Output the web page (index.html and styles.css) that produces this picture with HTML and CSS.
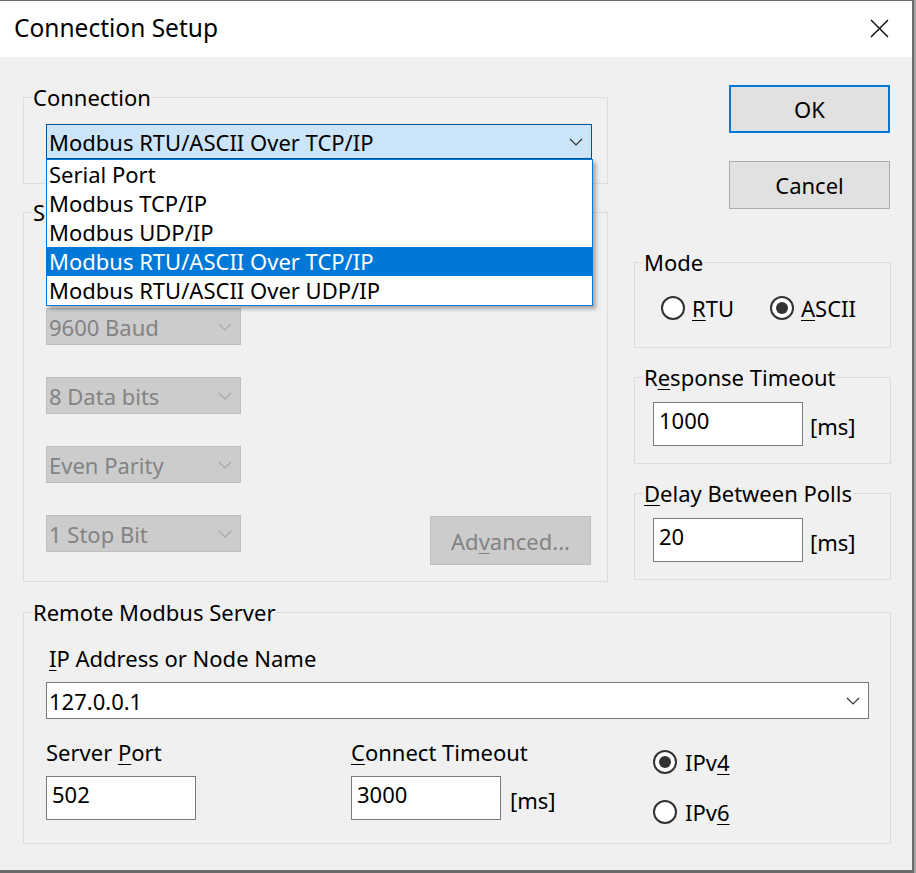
FILE: index.html
```html
<!DOCTYPE html>
<html lang="en">
<head>
<meta charset="utf-8">
<title>Connection Setup</title>
<link rel="stylesheet" href="styles.css">
</head>
<body>
<div class="window">
  <div class="titlebar">
    <span class="title">Connection Setup</span>
    <svg class="close" width="19" height="19" viewBox="0 0 19 19"><path d="M1 1 L18 18 M18 1 L1 18"/></svg>
  </div>
  <div class="content">
    <div class="top">
      <div class="left-col">
        <fieldset class="group group-conn">
          <legend class="group-title">Connection</legend>
          <div class="combo combo-active combo-conn">
            <span class="combo-text">Modbus RTU/ASCII Over TCP/IP</span>
            <svg class="chev" width="14" height="8" viewBox="0 0 14 8"><polyline points="1,1 7,7 13,1"/></svg>
            <ul class="droplist">
              <li>Serial Port</li>
              <li>Modbus TCP/IP</li>
              <li>Modbus UDP/IP</li>
              <li class="sel">Modbus RTU/ASCII Over TCP/IP</li>
              <li>Modbus RTU/ASCII Over UDP/IP</li>
            </ul>
          </div>
        </fieldset>
        <fieldset class="group group-serial">
          <legend class="group-title">Serial Settings</legend>
          <div class="combo combo-disabled combo-small combo-first">
            <span class="combo-text">9600 Baud</span>
            <svg class="chev" width="14" height="8" viewBox="0 0 14 8"><polyline points="1,1 7,7 13,1"/></svg>
          </div>
          <div class="combo combo-disabled combo-small combo-next">
            <span class="combo-text">8 Data bits</span>
            <svg class="chev" width="14" height="8" viewBox="0 0 14 8"><polyline points="1,1 7,7 13,1"/></svg>
          </div>
          <div class="combo combo-disabled combo-small combo-next">
            <span class="combo-text">Even Parity</span>
            <svg class="chev" width="14" height="8" viewBox="0 0 14 8"><polyline points="1,1 7,7 13,1"/></svg>
          </div>
          <div class="serial-last-row">
            <div class="combo combo-disabled combo-small combo-last">
              <span class="combo-text">1 Stop Bit</span>
              <svg class="chev" width="14" height="8" viewBox="0 0 14 8"><polyline points="1,1 7,7 13,1"/></svg>
            </div>
            <div class="btn btn-disabled btn-adv">Ad<u>v</u>anced...</div>
          </div>
        </fieldset>
      </div>
      <div class="right-col">
        <div class="btn btn-default btn-ok">OK</div>
        <div class="btn btn-cancel">Cancel</div>
        <fieldset class="group group-mode">
          <legend class="group-title">Mode</legend>
          <div class="radios-row">
            <div class="radio radio-rtu"><span class="radio-circle"></span><span class="radio-label"><u>R</u>TU</span></div>
            <div class="radio"><span class="radio-circle checked"></span><span class="radio-label"><u>A</u>SCII</span></div>
          </div>
        </fieldset>
        <fieldset class="group group-timing">
          <legend class="group-title">R<u>e</u>sponse Timeout</legend>
          <div class="input-row">
            <div class="edit">1000</div>
            <span class="unit">[ms]</span>
          </div>
        </fieldset>
        <fieldset class="group group-timing">
          <legend class="group-title"><u>D</u>elay Between Polls</legend>
          <div class="input-row">
            <div class="edit">20</div>
            <span class="unit">[ms]</span>
          </div>
        </fieldset>
      </div>
    </div>
    <fieldset class="group group-remote">
      <legend class="group-title">Remote Modbus Server</legend>
      <div class="field-label ip-label"><u>I</u>P Address or Node Name</div>
      <div class="combo combo-normal combo-ip">
        <span class="combo-text">127.0.0.1</span>
        <svg class="chev" width="14" height="8" viewBox="0 0 14 8"><polyline points="1,1 7,7 13,1"/></svg>
      </div>
      <div class="remote-row">
        <div class="col col-port">
          <div class="field-label">Server <u>P</u>ort</div>
          <div class="input-row input-row-remote">
            <div class="edit">502</div>
          </div>
        </div>
        <div class="col col-timeout">
          <div class="field-label"><u>C</u>onnect Timeout</div>
          <div class="input-row input-row-remote">
            <div class="edit">3000</div>
            <span class="unit unit-wide">[ms]</span>
          </div>
        </div>
        <div class="col col-ip">
          <div class="radio radio-ipv4"><span class="radio-circle checked"></span><span class="radio-label radio-label-ip">IPv<u>4</u></span></div>
          <div class="radio radio-ipv6"><span class="radio-circle"></span><span class="radio-label radio-label-ip">IPv<u>6</u></span></div>
        </div>
      </div>
    </fieldset>
  </div>
</div>
</body>
</html>
```

FILE: styles.css
```css
* { box-sizing: border-box; }
html, body { margin: 0; padding: 0; }
body {
  width: 916px;
  height: 873px;
  overflow: hidden;
  background: #a3a3a3;
  font-family: "Noto Sans", "Open Sans", sans-serif;
  font-size: 22px;
  line-height: 26px;
  color: #000;
}
u {
  text-decoration: underline;
  text-decoration-thickness: 1px;
  text-underline-offset: 3px;
}

.window {
  width: 914px;
  height: 873px;
  border-style: solid;
  border-color: #6b6b6b;
  border-width: 1px 2px 3px 0;
  background: #f0f0f0;
}

.titlebar {
  height: 56px;
  background: #fff;
  display: flex;
  align-items: flex-start;
  padding: 13px 0 0 14px;
}
.title {
  font-size: 24.5px;
  line-height: 28px;
}
.close {
  margin-left: auto;
  margin-right: 23px;
  margin-top: 5px;
  fill: none;
  stroke: #000;
  stroke-width: 1.3;
}

.content {
  padding: 27px 0 0 23px;
}
.top {
  display: grid;
  grid-template-columns: 585px 257px;
  column-gap: 26px;
  align-items: start;
}

.group {
  margin: 0;
  padding: 0;
  border: 1px solid #dcdcdc;
  min-width: 0;
}
.group-title {
  padding: 0 1px;
  margin-left: 8px;
  height: 26px;
  line-height: 26px;
  white-space: nowrap;
}

.group-conn { height: 100px; }
.group-serial { height: 383px; margin-top: 15px; }
.group-mode { height: 99px; margin-top: 40px; }
.group-timing { height: 100px; margin-top: 16px; }
.group-remote { width: 868px; height: 245px; margin-top: 17px; }

/* combos */
.combo {
  display: flex;
  align-items: center;
  border: 1px solid #7a7a7a;
  background: #fff;
  padding-left: 2px;
  position: relative;
}
.combo-text { line-height: 26px; white-space: nowrap; }
.chev {
  margin-left: auto;
  margin-right: 8px;
  fill: none;
  stroke: #333;
  stroke-width: 1.2;
}
.combo-active {
  background: #cce4f7;
  border-color: #005499;
}
.combo-conn {
  margin: 14px 0 0 22px;
  width: 546px;
  height: 35px;
}
.droplist {
  position: absolute;
  z-index: 10;
  left: -1px;
  right: -2px;
  top: 34px;
  margin: 0;
  padding: 0;
  list-style: none;
  background: #fff;
  border: 1px solid #0078d7;
  box-shadow: 3px 3px 4px rgba(0, 0, 0, 0.3);
}
.droplist li {
  height: 29px;
  line-height: 29px;
  padding-left: 2px;
  white-space: nowrap;
}
.droplist li.sel {
  background: #0078d7;
  color: #fff;
}

.combo-disabled {
  background: #cccccc;
  border-color: #bfbfbf;
  color: #838383;
}
.combo-disabled .chev { stroke: #a6a6a6; }
.combo-small {
  width: 195px;
  height: 37px;
  margin-left: 22px;
}
.combo-first { margin-top: 83px; }
.combo-next { margin-top: 32px; }
.serial-last-row {
  display: flex;
  align-items: flex-start;
  margin-top: 32px;
}
.combo-last { flex: none; }

/* buttons */
.btn {
  display: flex;
  align-items: center;
  justify-content: center;
  width: 161px;
  height: 48px;
  background: #e1e1e1;
  border: 1px solid #adadad;
  line-height: 26px;
}
.btn-default {
  border: 2px solid #0078d7;
}
.btn-ok { margin: 1px 0 0 95px; }
.btn-cancel { margin: 28px 0 0 95px; }
.btn-disabled {
  background: #cccccc;
  border-color: #bfbfbf;
  color: #838383;
}
.btn-adv {
  height: 49px;
  margin: 1px 0 0 189px;
}

/* radios */
.radios-row {
  display: flex;
  margin: 20px 0 0 26px;
}
.radio {
  display: flex;
  align-items: center;
  height: 26px;
}
.radio-rtu { width: 109px; }
.radio-circle {
  width: 24px;
  height: 24px;
  border: 2px solid #333;
  border-radius: 50%;
  background: #fff;
  position: relative;
  flex: none;
}
.radio-circle.checked::after {
  content: "";
  position: absolute;
  left: 4px;
  top: 4px;
  width: 12px;
  height: 12px;
  border-radius: 50%;
  background: #333;
}
.radio-label { margin-left: 7px; line-height: 26px; }

/* edits */
.input-row {
  display: flex;
  align-items: flex-start;
  margin: 12px 0 0 18px;
}
.edit {
  width: 150px;
  height: 44px;
  border: 1px solid #7a7a7a;
  background: #fff;
  padding: 4px 0 0 5px;
  line-height: 26px;
  flex: none;
}
.unit {
  margin: 11px 0 0 7px;
  line-height: 26px;
}
.unit-wide { margin-left: 9px; }

/* remote */
.field-label { line-height: 26px; height: 26px; }
.ip-label { margin: 20px 0 0 25px; }
.combo-ip {
  margin: 11px 21px 0 22px;
  height: 37px;
}
.remote-row {
  display: flex;
  margin: 20px 0 0 22px;
}
.col-port { width: 305px; }
.col-timeout { width: 302px; }
.input-row-remote { margin: 11px 0 0 0; }
.radio-ipv4 { margin-top: 10px; }
.radio-ipv6 { margin-top: 24px; }
.radio-label-ip { margin-left: 8px; }
```
